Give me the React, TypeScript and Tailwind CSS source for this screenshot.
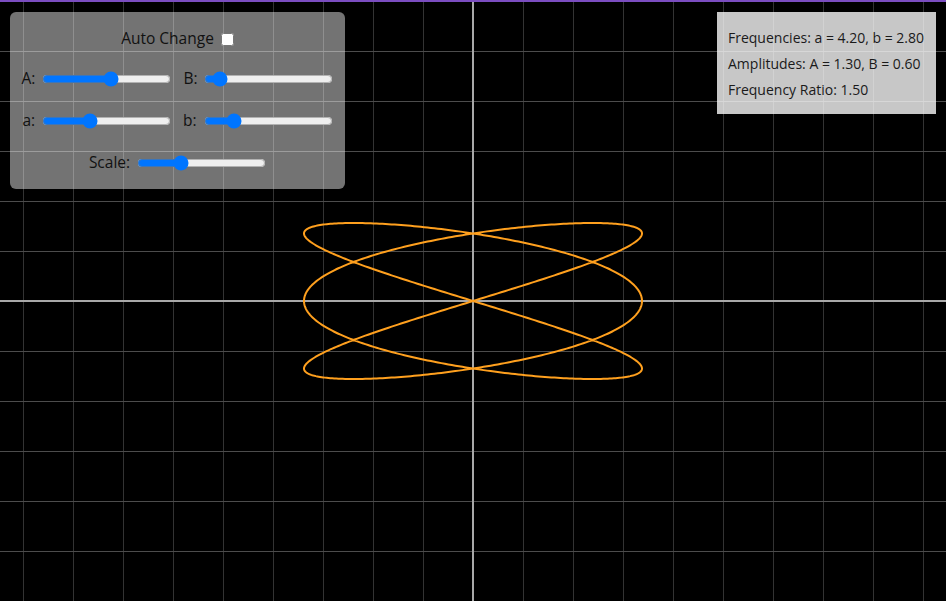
import React from 'react'

const W = 946
const H = 601
const CX = 473
const CY = 301

// lissajous params, same as the panels show
const params = { a: 4.2, b: 2.8, A: 1.3, B: 0.6, scale: 130 }

function curvePath() {
  const pts: string[] = []
  const n = 900
  for (let i = 0; i <= n; i++) {
    const t = (i / n) * Math.PI * 2
    const x = CX + params.A * params.scale * Math.cos(3 * t)
    const y = CY - params.B * params.scale * Math.sin(2 * t)
    pts.push(`${i === 0 ? 'M' : 'L'}${x.toFixed(2)},${y.toFixed(2)}`)
  }
  return pts.join(' ') + ' Z'
}

const Plot = () => {
  const vLines: number[] = []
  for (let x = CX % 50; x < W; x += 50) vLines.push(x)
  const hLines: number[] = []
  for (let y = CY % 50; y < H; y += 50) hLines.push(y)

  return (
    <svg width={W} height={H} className="block">
      <rect width={W} height={H} fill="#000" />
      {vLines.map((x) => (
        <line key={'v' + x} x1={x + 0.5} y1={0} x2={x + 0.5} y2={H} stroke="#333" strokeWidth={1} />
      ))}
      {hLines.map((y) => (
        <line key={'h' + y} x1={0} y1={y + 0.5} x2={W} y2={y + 0.5} stroke="#4c4c4c" strokeWidth={1} />
      ))}
      <line x1={CX} y1={0} x2={CX} y2={H} stroke="#a8a8a8" strokeWidth={2} />
      <line x1={0} y1={CY} x2={W} y2={CY} stroke="#a8a8a8" strokeWidth={2} />
      <path d={curvePath()} fill="none" stroke="#ffa01e" strokeWidth={2} strokeLinejoin="round" />
    </svg>
  )
}

const Slider = ({ label, min, max, step, value }: { label: string; min: number; max: number; step: number; value: number }) => (
  <label className="flex items-center gap-[7px]">
    <span>{label}</span>
    <input type="range" min={min} max={max} step={step} defaultValue={value} />
  </label>
)

export default function App() {
  return (
    <div
      className="relative w-[946px] h-[601px] overflow-hidden bg-black"
      style={{ fontFamily: '"Open Sans", Lato, sans-serif' }}
    >
      <Plot />
      <div className="absolute top-0 left-0 right-0 h-[2px] bg-[#7b4dc0]" />

      <div className="absolute left-[10px] top-[12px] w-[335px] h-[177px] rounded-md bg-[rgba(255,255,255,0.45)] flex flex-col items-center text-[15.5px] text-[#111]">
        <label className="mt-[17px] h-[20px] flex items-center gap-[7px]">
          <span>Auto Change</span>
          <input type="checkbox" className="w-[13px] h-[13px]" />
        </label>
        <div className="mt-[20px] h-[20px] flex items-center gap-[12px]">
          <Slider label="A:" min={0.5} max={2} step={0.1} value={1.3} />
          <Slider label="B:" min={0.5} max={2} step={0.1} value={0.6} />
        </div>
        <div className="mt-[22px] h-[20px] flex items-center gap-[12px]">
          <Slider label="a:" min={1} max={10} step={0.1} value={4.2} />
          <Slider label="b:" min={1} max={10} step={0.1} value={2.8} />
        </div>
        <div className="mt-[22px] h-[20px] flex items-center">
          <Slider label="Scale:" min={50} max={300} step={1} value={130} />
        </div>
      </div>

      <div className="absolute left-[717px] top-[12px] w-[219px] h-[102px] bg-[rgba(255,255,255,0.78)] px-[11px] pt-[17px] text-[14px] text-[#1a1a1a] flex flex-col gap-[8px] leading-[18px]">
        <div>Frequencies: a = 4.20, b = 2.80</div>
        <div>Amplitudes: A = 1.30, B = 0.60</div>
        <div>Frequency Ratio: 1.50</div>
      </div>
    </div>
  )
}
